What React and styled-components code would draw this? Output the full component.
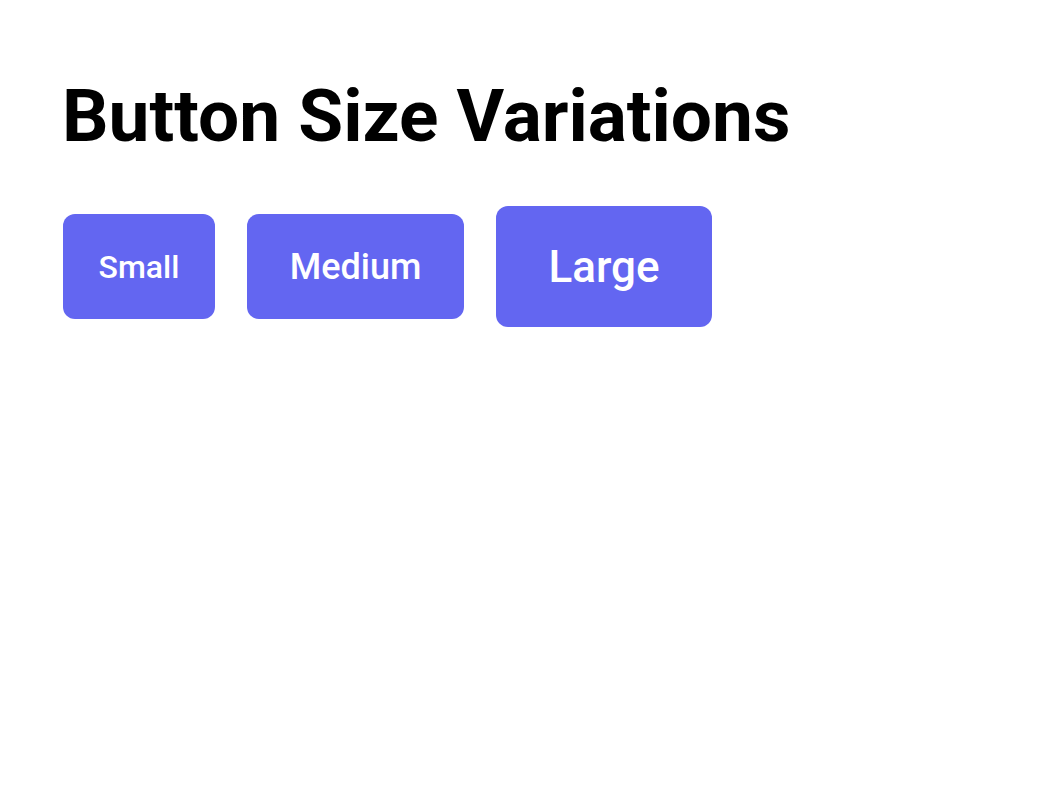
import React from "react";
import styled, { createGlobalStyle } from "styled-components";

const Global = createGlobalStyle`
  html, body { margin: 0; padding: 0; background: #ffffff; }
  body { font-family: Roboto, "Liberation Sans", sans-serif; }
`;

const Page = styled.main`
  padding: 73px 63px;
`;

const Title = styled.h1`
  margin: 0 0 45px -1px;
  font-size: 73px;
  font-weight: 700;
  line-height: 1.2;
  color: #000;
`;

const Row = styled.div`
  display: flex;
  align-items: center;
  gap: 32px;
`;

const sizes = {
  small: { font: 32, h: 105, px: 35.5 },
  medium: { font: 36, h: 105, px: 43 },
  large: { font: 44, h: 121, px: 52 },
};

const Button = styled.button`
  display: inline-flex;
  align-items: center;
  justify-content: center;
  height: ${(p) => sizes[p.$size].h}px;
  padding: 2px ${(p) => sizes[p.$size].px}px 0;
  font-family: Roboto, "Liberation Sans", sans-serif;
  font-size: ${(p) => sizes[p.$size].font}px;
  font-weight: 500;
  color: #ffffff;
  background: #6366f1;
  border: none;
  border-radius: 12px;
  cursor: pointer;
`;

export default function App() {
  return (
    <>
      <Global />
      <Page>
        <Title>Button Size Variations</Title>
        <Row>
          <Button $size="small">Small</Button>
          <Button $size="medium">Medium</Button>
          <Button $size="large">Large</Button>
        </Row>
      </Page>
    </>
  );
}
